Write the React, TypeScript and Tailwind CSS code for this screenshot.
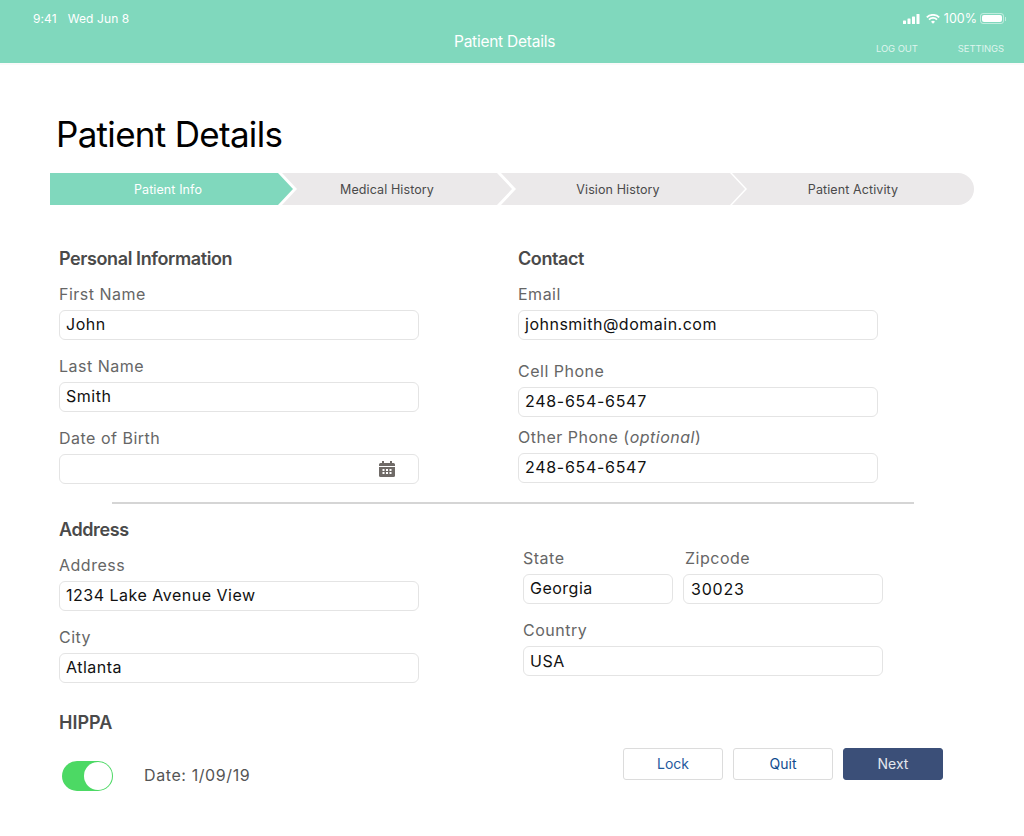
import React from "react";

const Label = ({ children, className = "" }: { children: React.ReactNode; className?: string }) => (
  <div className={`h-5 mb-1.5 text-[16px] leading-5 tracking-[0.5px] text-[#666666] ${className}`}>{children}</div>
);

const Input = ({ value, className = "w-[360px] tracking-[0.5px]" }: { value?: string; className?: string }) => (
  <div className={`h-[30px] rounded-md border border-[#e4e4e4] bg-white pl-[6px] text-[16px] leading-[26px] text-[#111111] ${className}`}>
    {value}
  </div>
);

const Heading = ({ children }: { children: React.ReactNode }) => (
  <h2 className="h-6 mb-3.5 pt-px text-[18px] leading-6 font-semibold tracking-[-0.4px] text-[#4a4a4a]">{children}</h2>
);

const CalendarIcon = () => (
  <svg width="16" height="16" viewBox="0 0 16 16" fill="#6f6a67">
    <rect x="3" y="0" width="2" height="3" />
    <rect x="11" y="0" width="2" height="3" />
    <path d="M0 3.5a1.5 1.5 0 0 1 1.5-1.5h13A1.5 1.5 0 0 1 16 3.5V5H0z" />
    <path d="M0 6h16v8.5a1.5 1.5 0 0 1-1.5 1.5h-13A1.5 1.5 0 0 1 0 14.5z" />
    <g fill="#ffffff">
      <rect x="3.5" y="8" width="2" height="2" />
      <rect x="7" y="8" width="2" height="2" />
      <rect x="10.5" y="8" width="2" height="2" />
      <rect x="3.5" y="11" width="2" height="2" />
      <rect x="7" y="11" width="2" height="2" />
      <rect x="10.5" y="11" width="2" height="2" />
    </g>
  </svg>
);

const StatusIcons = () => (
  <div className="flex items-center">
    <svg width="17" height="10" viewBox="0 0 17 10" fill="#ffffff">
      <rect x="0" y="6.5" width="3" height="3.5" rx="0.6" />
      <rect x="4.5" y="4.5" width="3" height="5.5" rx="0.6" />
      <rect x="9" y="2.5" width="3" height="7.5" rx="0.6" />
      <rect x="13.5" y="0" width="3" height="10" rx="0.6" />
    </svg>
    <svg className="ml-[6px]" width="14" height="10" viewBox="0 0 14 10" fill="none" stroke="#ffffff" strokeWidth="1.8">
      <path d="M0.8 3.4a8.8 8.8 0 0 1 12.4 0" />
      <path d="M3 5.6a5.7 5.7 0 0 1 8 0" />
      <path d="M7 9.8 5 7.8a2.8 2.8 0 0 1 4 0z" fill="#ffffff" stroke="none" />
    </svg>
    <span className="ml-1 text-[12.5px] leading-4 text-white">100%</span>
    <div className="ml-[3px] flex items-center">
      <div className="h-[11px] w-[24px] rounded-[3px] border border-white/50 p-[1px]">
        <div className="h-full w-full rounded-[2px] bg-white" />
      </div>
      <div className="ml-[1px] h-[4px] w-[1px] bg-white/50" />
    </div>
  </div>
);

const App = () => {
  return (
    <div className="min-h-[836px] bg-white font-['Inter',sans-serif]">
      <header className="h-[65px] border-b-2 border-[#fafafa] bg-[#80d8bd]">
        <div className="flex h-[37px] items-center justify-between pl-[33px] pr-[18px]">
          <div className="text-[12px] tracking-[0.1px] text-white">
            9:41<span className="ml-[11px]">Wed Jun 8</span>
          </div>
          <StatusIcons />
        </div>
        <div className="-mt-px flex h-[12px] items-center">
          <div className="ml-[454px] text-[15.5px] tracking-[-0.25px] text-white">Patient Details</div>
          <div className="ml-auto flex gap-10 pr-5 pt-[14px] text-[9.5px] tracking-[-0.1px] text-white/75">
            <span>LOG OUT</span>
            <span>SETTINGS</span>
          </div>
        </div>
      </header>

      <main className="pt-[47px]">
        <h1 className="ml-14 text-[35px] leading-[44px] tracking-[-0.7px] text-black">Patient Details</h1>

        <div className="ml-[50px] mt-[17px] flex h-8 text-[12.5px] leading-[33px] tracking-[0.1px] text-[#4a4a4a]">
          <div className="w-[243px] bg-[#80d8bd] pr-[7px] text-center text-white [clip-path:polygon(0_0,228px_0,243px_50%,228px_100%,0_100%)]">
            Patient Info
          </div>
          <div className="-ml-[11px] w-[230px] bg-[#ebe9ea] pr-5 text-center [clip-path:polygon(0_0,215px_0,230px_50%,215px_100%,0_100%,15px_50%)]">
            Medical History
          </div>
          <div className="-ml-[11px] w-[244px] bg-[#ebe9ea] pr-[10px] text-center [clip-path:polygon(0_0,229px_0,244px_50%,229px_100%,0_100%,15px_50%)]">
            Vision History
          </div>
          <div className="-ml-[13px] w-[242px] rounded-r-2xl bg-[#ebe9ea] text-center [clip-path:polygon(0_0,100%_0,100%_100%,0_100%,15px_50%)]">
            Patient Activity
          </div>
        </div>

        <section className="ml-[59px] mt-[41px] flex gap-[99px]">
          <div className="w-[360px]">
            <Heading>Personal Information</Heading>
            <Label>First Name</Label>
            <Input value="John" />
            <Label className="mt-4">Last Name</Label>
            <Input value="Smith" />
            <Label className="mt-4">Date of Birth</Label>
            <div className="relative">
              <Input />
              <div className="absolute left-[320px] top-[7px]">
                <CalendarIcon />
              </div>
            </div>
          </div>
          <div className="w-[360px]">
            <Heading>Contact</Heading>
            <Label>Email</Label>
            <Input value="johnsmith@domain.com" className="w-[360px] tracking-[0.5px]" />
            <Label className="mt-[21px]">Cell Phone</Label>
            <Input value="248-654-6547" className="w-[360px] tracking-[0.7px]" />
            <Label className="mt-2.5">
              Other Phone (<em>optional</em>)
            </Label>
            <Input value="248-654-6547" className="w-[360px] tracking-[0.7px]" />
          </div>
        </section>

        <div className="ml-[112px] mt-[18px] h-0.5 w-[802px] bg-[#d5d5d5]" />

        <section className="ml-[59px] mt-[13px] flex gap-[104px]">
          <div className="w-[360px]">
            <Heading>Address</Heading>
            <Label>Address</Label>
            <Input value="1234 Lake Avenue View" />
            <Label className="mt-4">City</Label>
            <Input value="Atlanta" />
          </div>
          <div className="w-[360px] pt-[31px]">
            <div className="flex gap-2.5">
              <div>
                <Label>State</Label>
                <Input value="Georgia" className="w-[150px] tracking-[0.5px]" />
              </div>
              <div>
                <Label className="pl-0.5">Zipcode</Label>
                <Input value="30023" className="w-[200px] leading-[28px] pl-[7px] tracking-[0.8px]" />
              </div>
            </div>
            <Label className="mt-4">Country</Label>
            <Input value="USA" className="w-[360px] leading-[28px] tracking-[0.5px]" />
          </div>
        </section>

        <section className="ml-[59px] mt-[27px] flex justify-between pr-[81px]">
          <div>
            <h2 className="h-6 pt-px text-[18px] leading-6 font-semibold text-[#4a4a4a]">HIPPA</h2>
            <div className="ml-[3px] mt-[27px] flex items-center">
              <div className="flex h-[30px] w-[51px] items-center justify-end rounded-full bg-[#4cd964] pr-px">
                <div className="h-7 w-7 rounded-full bg-white" />
              </div>
              <div className="ml-[31px] -mt-0.5 text-[16px] tracking-[0.6px] text-[#555555]">Date: 1/09/19</div>
            </div>
          </div>
          <div className="mt-[38px] flex h-8 gap-2.5 text-[14px] leading-[30px]">
            <button className="w-[100px] rounded-[3px] border border-[#dcdcdc] bg-white text-[#1f5a9e]">Lock</button>
            <button className="w-[100px] rounded-[3px] border border-[#dcdcdc] bg-white text-[#0f4c8f]">Quit</button>
            <button className="w-[100px] rounded-[3px] border border-[#3b4f78] bg-[#3b4f78] text-[#e4e7ee]">Next</button>
          </div>
        </section>
      </main>
    </div>
  );
};

export default App;
